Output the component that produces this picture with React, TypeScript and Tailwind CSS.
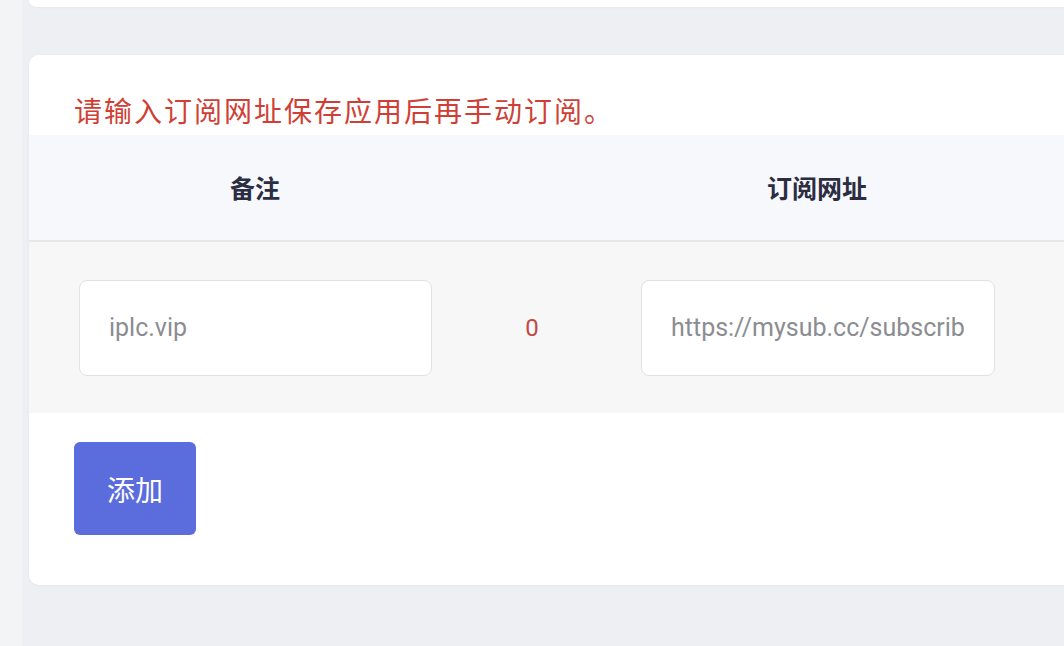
import React from "react";

const cjk = { fontFamily: '"Noto Sans CJK SC", "Noto Sans", sans-serif' };
const latin = { fontFamily: 'Roboto, "Noto Sans CJK SC", sans-serif' };

export default function App() {
  return (
    <div className="flex h-[646px] w-[1064px] overflow-hidden bg-[#edeff2]" style={cjk}>
      <div className="h-full w-[22px] shrink-0 bg-[#f3f4f6]" />
      <div className="flex min-w-0 flex-1 flex-col pl-[7px]">
        <div className="h-[7px] w-[1100px] rounded-b-[8px] bg-white shadow-[0_1px_2px_rgba(0,0,0,0.03)]" />
        <div className="mt-[48px] flex w-[1100px] flex-col rounded-[10px] bg-white pb-[50px] shadow-[0_1px_3px_rgba(0,0,0,0.04)]">
          <div className="h-[80px] pl-[45px] pt-[36px]">
            <p className="text-[28px] leading-[39px] tracking-[2px] text-[#cf3f35]">
              请输入订阅网址保存应用后再手动订阅。
            </p>
          </div>
          <div className="flex h-[107px] items-center border-b-2 border-[#e6e8ec] bg-[#f7f8fb]">
            <div className="w-[452px] text-center text-[25px] font-bold text-[#2b2d42]">备注</div>
            <div className="w-[102px]" />
            <div className="w-[468px] text-center text-[25px] font-bold text-[#2b2d42]">订阅网址</div>
          </div>
          <div className="flex h-[171px] items-center bg-[#f7f7f7]">
            <div className="flex w-[452px] justify-center pl-[1px]">
              <div className="flex h-[96px] w-[353px] items-center rounded-[8px] border border-[#e1e2e4] bg-white px-[29px]">
                <div className="overflow-hidden whitespace-nowrap text-[25px] text-[#8b8d91]" style={latin}>
                  iplc.vip
                </div>
              </div>
            </div>
            <div className="w-[102px] text-center text-[24px] text-[#c04a45]" style={latin}>
              0
            </div>
            <div className="w-[468px] pl-[58px]">
              <div className="flex h-[96px] w-[354px] items-center rounded-[8px] border border-[#e1e2e4] bg-white pl-[29px] pr-[20px]">
                <div className="whitespace-nowrap text-[25px] text-[#8b8d91]" style={latin}>
                  https://mysub.cc/subscrib
                </div>
              </div>
            </div>
          </div>
          <div className="pl-[45px] pt-[29px]">
            <button className="flex h-[93px] w-[122px] items-center justify-center rounded-[6px] bg-[#5b6cdd] text-[28px] text-white">
              添加
            </button>
          </div>
        </div>
      </div>
    </div>
  );
}
